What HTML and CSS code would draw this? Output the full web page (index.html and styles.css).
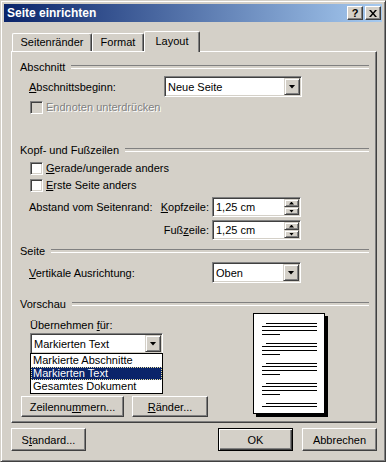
FILE: index.html
```html
<!DOCTYPE html>
<html>
<head lang="de">
    <meta charset="UTF-8">
    <title>Seite einrichten</title>
    <link rel="stylesheet" href="styles.css">
</head>
<body>
<div id="dialog">
    <div id="titlebar">
        <span class="caption">Seite einrichten</span>
        <span class="cap-btn help">?</span>
        <span class="cap-btn close">
            <svg width="8" height="7" viewBox="0 0 8 7"><path d="M0 0h2l2 2.4L6 0h2L5 3.5 8 7H6L4 4.6 2 7H0l3-3.5z" fill="#000"/></svg>
        </span>
    </div>

    <div id="body">
        <ul id="tabs">
            <li class="tab w-margins">Seitenränder</li>
            <li class="tab w-format">Format</li>
            <li class="tab w-layout selected">Layout</li>
        </ul>

        <div id="panel">
            <!-- Abschnitt -->
            <div class="legend">Abschnitt</div>
            <div class="row row-start">
                <span class="label start-label"><u>A</u>bschnittsbeginn:</span>
                <div class="field start-field"><span>Neue Seite</span><i class="drop"></i></div>
            </div>
            <div class="check disabled endnote"><i class="box"></i><span>Endnoten unterdrücken</span></div>

            <!-- Kopf- und Fußzeilen -->
            <div class="legend legend-kopf">Kopf- und Fußzeilen</div>
            <div class="check check-even"><i class="box"></i><span><u>G</u>erade/ungerade anders</span></div>
            <div class="check check-first"><i class="box"></i><span><u>E</u>rste Seite anders</span></div>
            <div class="spin-grid">
                <span class="label">Abstand vom Seitenrand:</span>
                <span class="label right"><u>K</u>opfzeile:</span>
                <div class="field"><span>1,25 cm</span><i class="spin"><b class="up"></b><b class="down"></b></i></div>
                <span></span>
                <span class="label right">Fuß<u>z</u>eile:</span>
                <div class="field"><span>1,25 cm</span><i class="spin"><b class="up"></b><b class="down"></b></i></div>
            </div>

            <!-- Seite -->
            <div class="legend legend-seite">Seite</div>
            <div class="row row-align">
                <span class="label align-label"><u>V</u>ertikale Ausrichtung:</span>
                <div class="field align-field"><span>Oben</span><i class="drop"></i></div>
            </div>

            <!-- Vorschau -->
            <div class="legend legend-preview">Vorschau</div>
            <div class="preview-body">
                <div class="preview-left">
                    <div class="label apply-label">Übernehmen <u>f</u>ür:</div>
                    <div class="combo-wrap">
                        <div class="field apply-field"><span>Markierten Text</span><i class="drop"></i></div>
                        <ul class="droplist">
                            <li>Markierte Abschnitte</li>
                            <li class="hot">Markierten Text</li>
                            <li>Gesamtes Dokument</li>
                        </ul>
                    </div>
                    <div class="btn-row">
                        <span class="btn btn-lines">Zeilennu<u>m</u>mern...</span>
                        <span class="btn btn-borders"><u>R</u>änder...</span>
                    </div>
                </div>
                <svg class="page" width="75" height="104" viewBox="0 0 75 104">
                    <rect x="3" y="3" width="72" height="101" fill="#000"/>
                    <rect x="0.5" y="0.5" width="71" height="100" fill="#fff" stroke="#000"/>
                    <g stroke="#000" stroke-width="1">
                        <path d="M13 10.5H64M9 13.5H64M9 17.5H64M9 21.5H27"/>
                        <path d="M13 30.5H64M9 33.5H64M9 37.5H64M9 41.5H27"/>
                        <path d="M13 50.5H64M9 53.5H64M9 57.5H64M9 61.5H27"/>
                        <path d="M13 70.5H64M9 73.5H64M9 77.5H64M9 81.5H27"/>
                        <path d="M13 90.5H64M9 93.5H64"/>
                    </g>
                </svg>
            </div>
        </div>

        <div id="footer">
            <span class="btn btn-big">S<u>t</u>andard...</span>
            <span class="btn btn-big default ok">OK</span>
            <span class="btn btn-big cancel">Abbrechen</span>
        </div>
    </div>
</div>
</body>
</html>
```

FILE: styles.css
```css
*{
    padding: 0;
    margin: 0;
    box-sizing: border-box;
}
ul{
    list-style: none;
}
body{
    background: #d4d0c8;
    font-family: "Liberation Sans", Arial, sans-serif;
    font-size: 11px;
    color: #000;
}
u{
    text-decoration: underline;
    text-underline-offset: 1px;
}

/* window frame */
#dialog{
    width: 386px;
    height: 462px;
    background: #d4d0c8;
    border: 1px solid;
    border-color: #d4d0c8 #404040 #404040 #d4d0c8;
    box-shadow: inset 1px 1px #fff, inset -1px -1px #808080;
    padding: 3px;
    display: flex;
    flex-direction: column;
}
#titlebar{
    height: 18px;
    background: linear-gradient(to right, #0a246a, #a6caf0);
    display: flex;
    align-items: center;
    padding: 0 1px 0 3px;
}
#titlebar .caption{
    flex: 1;
    color: #fff;
    font-weight: bold;
    font-size: 12px;
}
.cap-btn{
    width: 16px;
    height: 14px;
    background: #d4d0c8;
    border: 1px solid;
    border-color: #fff #404040 #404040 #fff;
    box-shadow: inset -1px -1px #808080;
    display: flex;
    align-items: center;
    justify-content: center;
    font-weight: bold;
    font-size: 11px;
    line-height: 12px;
}
.cap-btn.help{
    margin-right: 2px;
}

#body{
    padding: 0 5px 0 7px;
}

/* tabs */
#tabs{
    margin-top: 9px;
    padding-left: 1px;
    height: 20px;
    display: flex;
    align-items: flex-end;
}
.tab{
    height: 18px;
    line-height: 16px;
    text-align: center;
    border-top: 1px solid #fff;
    border-left: 1px solid #fff;
    border-right: 1px solid #404040;
    box-shadow: inset -1px 0 #808080;
    border-radius: 2px 2px 0 0;
    background: #d4d0c8;
}
.w-margins{ width: 80px; }
.w-format{ width: 52px; }
.w-layout{ width: 56px; }
.tab.selected{
    height: 21px;
    line-height: 19px;
    margin-bottom: -1px;
    position: relative;
    z-index: 1;
}

/* panel */
#panel{
    height: 372px;
    border-top: 1px solid #fff;
    border-left: 1px solid #fff;
    border-right: 1px solid #404040;
    border-bottom: 1px solid #404040;
    box-shadow: inset -1px -1px #808080;
    padding: 8px 7px 0 8px;
}
.legend{
    height: 14px;
    line-height: 14px;
    display: flex;
    align-items: center;
    gap: 6px;
    white-space: nowrap;
}
.legend::after{
    content: '';
    flex: 1;
    height: 2px;
    border-top: 1px solid #808080;
    border-bottom: 1px solid #fff;
}
.legend-kopf{ margin-top: 29px; }
.legend-seite{ margin-top: 4px; }
.legend-preview{ margin-top: 14px; }

.label{
    white-space: nowrap;
    line-height: 14px;
}
.right{
    text-align: right;
}
.row{
    display: flex;
    align-items: center;
    margin-left: 9px;
}
.row-start{ margin-top: 2px; }
.start-label{ width: 135px; }
.start-field{ width: 138px; }
.row-align{ margin-top: 4px; }
.align-label{ width: 183px; }
.align-field{ width: 89px; }

/* sunken fields */
.field{
    height: 21px;
    background: #fff;
    border: 1px solid;
    border-color: #808080 #fff #fff #808080;
    box-shadow: inset 1px 1px #404040, inset -1px -1px #d4d0c8;
    padding: 1px;
    display: flex;
    align-items: center;
}
.field span{
    flex: 1;
    padding-left: 2px;
    white-space: nowrap;
}
.drop{
    width: 16px;
    height: 17px;
    background: #d4d0c8;
    border: 1px solid;
    border-color: #d4d0c8 #404040 #404040 #d4d0c8;
    box-shadow: inset 1px 1px #fff, inset -1px -1px #808080;
    display: flex;
    align-items: center;
    justify-content: center;
}
.drop::after{
    content: '';
    width: 7px;
    height: 4px;
    background: #000;
    clip-path: polygon(0 0, 100% 0, 50% 100%);
}

/* checkboxes */
.check{
    height: 13px;
    line-height: 13px;
    display: flex;
    align-items: center;
    gap: 3px;
    margin-left: 10px;
    white-space: nowrap;
}
.box{
    width: 13px;
    height: 13px;
    background: #fff;
    border: 1px solid;
    border-color: #808080 #fff #fff #808080;
    box-shadow: inset 1px 1px #404040, inset -1px -1px #d4d0c8;
}
.check.disabled{
    color: #808080;
    text-shadow: 1px 1px 0 #fff;
}
.check.disabled .box{
    background: #d4d0c8;
}
.endnote{ margin-top: 4px; }
.check-even{ margin-top: 5px; }
.check-first{ margin-top: 4px; }

/* spin fields */
.spin-grid{
    margin: 5px 0 0 9px;
    display: grid;
    grid-template-columns: 126px 51px 89px;
    grid-auto-rows: 20px;
    column-gap: 3px;
    row-gap: 3px;
    align-items: center;
}
.spin-grid .field{
    height: 20px;
}
.spin{
    width: 15px;
    height: 16px;
    display: flex;
    flex-direction: column;
}
.spin b{
    height: 8px;
    background: #d4d0c8;
    border: 1px solid;
    border-color: #d4d0c8 #404040 #404040 #d4d0c8;
    box-shadow: inset 1px 1px #fff, inset -1px -1px #808080;
    display: flex;
    align-items: center;
    justify-content: center;
}
.spin b::after{
    content: '';
    width: 5px;
    height: 3px;
    background: #000;
}
.spin .up::after{
    clip-path: polygon(50% 0, 100% 100%, 0 100%);
}
.spin .down::after{
    clip-path: polygon(0 0, 100% 0, 50% 100%);
}

/* preview */
.preview-body{
    margin: 2px 0 0 1px;
    display: flex;
}
.preview-left{
    width: 232px;
}
.apply-label{
    margin: 5px 0 0 9px;
}
.combo-wrap{
    position: relative;
    margin: 1px 0 0 9px;
    width: 133px;
}
.droplist{
    position: absolute;
    top: 20px;
    left: 0;
    width: 133px;
    background: #fff;
    border: 1px solid #000;
    z-index: 2;
}
.droplist li{
    height: 13px;
    line-height: 13px;
    padding-left: 2px;
    white-space: nowrap;
}
.droplist li.hot{
    background: #0a246a;
    color: #fff;
    outline: 1px dotted #e8e0a0;
    outline-offset: -1px;
}
.btn-row{
    margin-top: 42px;
    display: flex;
    gap: 8px;
}
.btn{
    height: 21px;
    background: #d4d0c8;
    border: 1px solid;
    border-color: #fff #404040 #404040 #fff;
    box-shadow: inset -1px -1px #808080;
    display: flex;
    align-items: center;
    justify-content: center;
    white-space: nowrap;
}
.btn-lines{ width: 103px; }
.btn-borders{ width: 76px; }
.page{
    display: block;
}

/* footer */
#footer{
    margin-top: 5px;
    display: flex;
}
.btn-big{
    width: 75px;
    height: 23px;
}
.btn.default{
    border-color: #000;
    box-shadow: inset 1px 1px #fff, inset -1px -1px #404040, inset -2px -2px #808080;
}
.ok{
    margin-left: auto;
}
.cancel{
    margin-left: 9px;
}
```
